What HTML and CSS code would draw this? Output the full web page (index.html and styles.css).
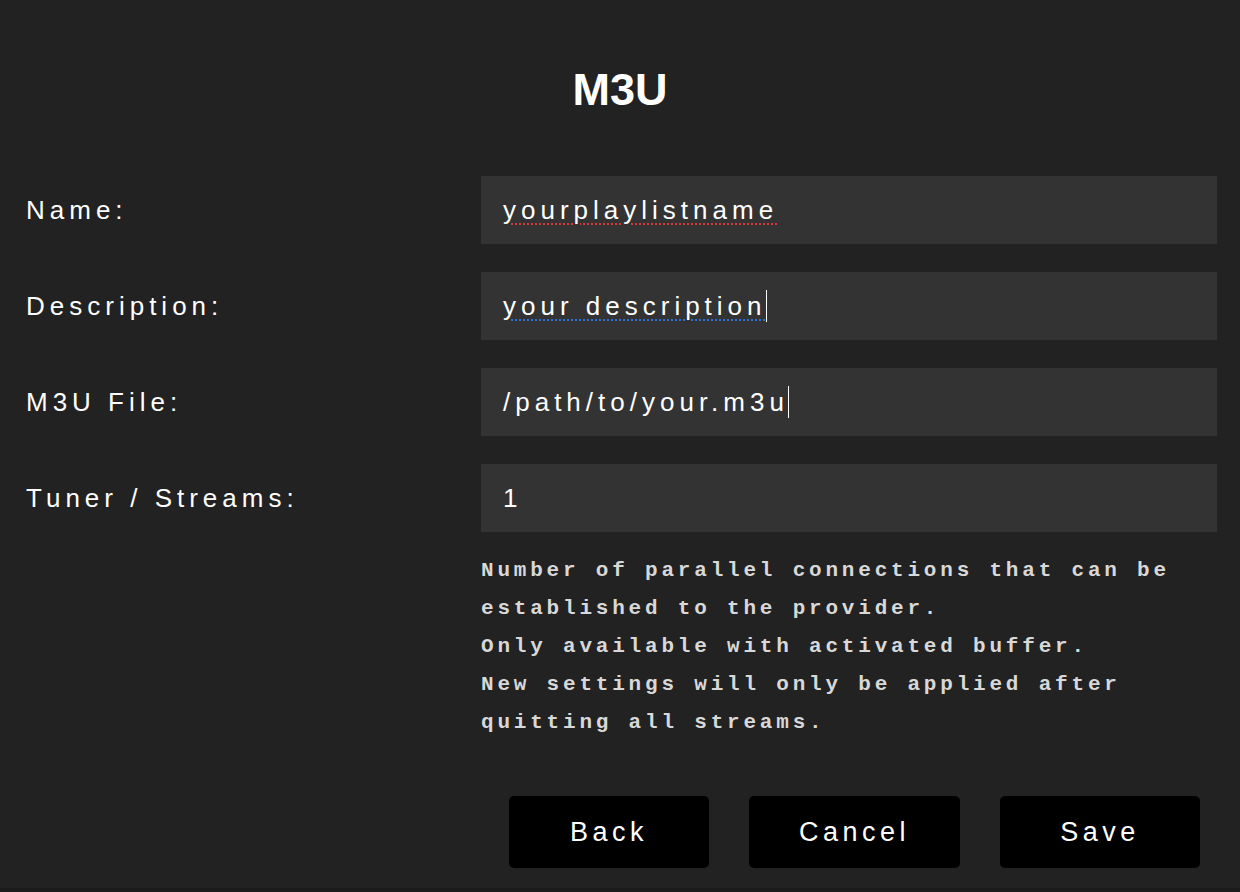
FILE: index.html
```html
<!DOCTYPE html>
<html lang="en">
  <head>
    <meta charset="UTF-8" />
    <title>M3U Playlist</title>
    <link rel="stylesheet" href="styles.css">
  </head>
  <body>
    <div class="page">
      <h1>M3U</h1>
      <form class="settings">
        <label class="label">Name:</label>
        <div class="field"><span class="value misspelled">yourplaylistname</span></div>

        <label class="label">Description:</label>
        <div class="field"><span class="value grammar">your description</span><span class="caret"></span></div>

        <label class="label">M3U File:</label>
        <div class="field"><span class="value">/path/to/your.m3u</span><span class="caret"></span></div>

        <label class="label">Tuner / Streams:</label>
        <div class="field"><span class="value">1</span></div>

        <div></div>
        <p class="hint">Number of parallel connections that can be established to the provider.<br />Only available with activated buffer.<br />New settings will only be applied after quitting all streams.</p>
      </form>
      <div class="btn-container">
        <button type="button">Back</button>
        <button type="button">Cancel</button>
        <button type="button">Save</button>
      </div>
    </div>
  </body>
</html>
```

FILE: styles.css
```css
body {
  margin: 0;
  background-color: #1b1b1b;
  font-family: "Liberation Sans", Arial, sans-serif;
  color: white;
}
.page {
  background-color: #222222;
  height: 888px;
  padding-top: 64px;
  box-sizing: border-box;
}
h1 {
  margin: 0;
  font-size: 45px;
  line-height: 52px;
  font-weight: 700;
  text-align: center;
}
.settings {
  display: grid;
  grid-template-columns: 1fr 736px;
  row-gap: 28px;
  padding: 0 23px 0 26px;
  margin-top: 60px;
}
.label {
  display: flex;
  align-items: center;
  font-size: 26px;
  letter-spacing: 5px;
}
.field {
  display: flex;
  align-items: center;
  height: 68px;
  padding-left: 22px;
  background-color: #333333;
  font-size: 26px;
  letter-spacing: 5px;
}
.misspelled {
  text-decoration: underline dotted #d8383a 2px;
  text-underline-offset: 5px;
}
.grammar {
  text-decoration: underline dotted #2b6fd6 2px;
  text-underline-offset: 5px;
}
.caret {
  display: inline-block;
  width: 1px;
  height: 32px;
  background-color: white;
  margin-left: -1px;
}
.hint {
  margin: -8px 0 0;
  font-family: "Liberation Mono", "Courier New", monospace;
  font-size: 21px;
  font-weight: 700;
  letter-spacing: 3.8px;
  line-height: 38px;
  color: #d8d8d8;
}
.btn-container {
  display: flex;
  justify-content: flex-end;
  gap: 40px;
  padding-right: 40px;
  margin-top: 54px;
}
button {
  min-width: 200px;
  height: 72px;
  padding: 0 50px;
  background-color: black;
  border: none;
  border-radius: 5px;
  color: white;
  font-family: "Liberation Sans", Arial, sans-serif;
  font-size: 27px;
  letter-spacing: 4.5px;
  cursor: pointer;
}
```
